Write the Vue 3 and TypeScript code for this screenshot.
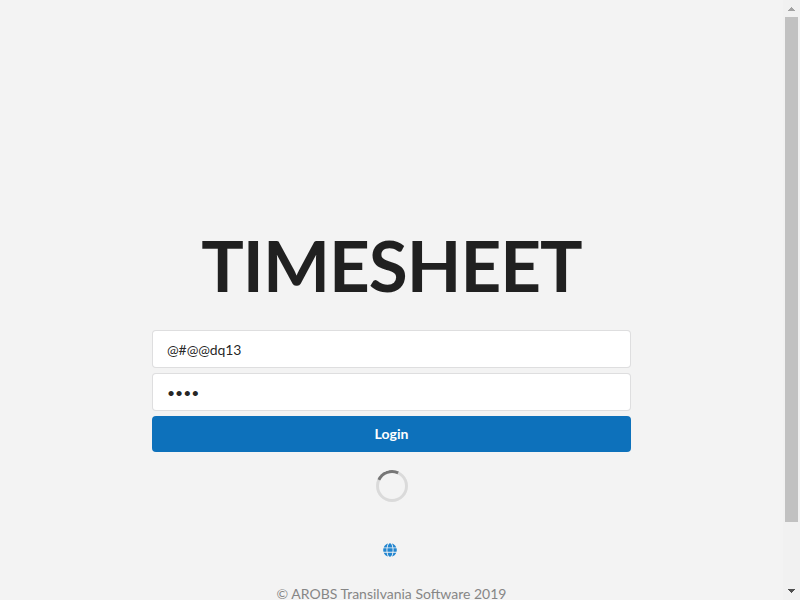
<script setup lang="ts">
import { ref } from 'vue'

const username = ref<string>('@#@@dq13')
const password = ref<string>('abcd')
</script>

<template>
  <div class="page">
    <main class="content">
      <h1 class="title">TIMESHEET</h1>
      <form class="form" @submit.prevent>
        <input v-model="username" class="field" type="text" />
        <input v-model="password" class="field secret" type="password" />
        <button class="login" type="submit">Login</button>
      </form>
      <div class="loader"></div>
      <svg class="globe" viewBox="0 0 496 512" width="14" height="14">
        <path
          fill="#2185d0"
          d="M336.500 160C322 70.700 287.800 8 248 8s-74 62.700-88.500 152h177zM152 256c0 22.200 1.200 43.500 3.300 64h185.300c2.100-20.500 3.300-41.800 3.300-64s-1.200-43.500-3.300-64H155.300c-2.100 20.500-3.300 41.800-3.300 64zm324.700-96c-28.600-67.900-86.500-120.400-158-141.600 24.400 33.800 41.200 84.700 50 141.600h108zM177.200 18.400C105.800 39.600 47.800 92.100 19.300 160h108c8.700-56.900 25.500-107.800 49.900-141.600zM487.400 192H372.700c2.100 21 3.300 42.500 3.300 64s-1.200 43-3.300 64h114.600c5.500-20.500 8.600-41.800 8.600-64s-3.100-43.500-8.500-64zM120 256c0-21.500 1.200-43 3.300-64H8.600C3.200 212.500 0 233.800 0 256s3.200 43.500 8.600 64h114.600c-2-21-3.200-42.500-3.200-64zm39.500 96c14.500 89.300 48.700 152 88.500 152s74-62.700 88.500-152h-177zm159.300 141.600c71.400-21.200 129.400-73.700 158-141.600h-108c-8.800 56.900-25.600 107.800-50 141.600zM19.300 352c28.600 67.900 86.500 120.400 158 141.600-24.400-33.800-41.200-84.700-50-141.600h-108z"
        />
      </svg>
      <footer class="footer">© AROBS Transilvania Software 2019</footer>
    </main>
    <div class="scrollbar">
      <svg class="arrow" width="7" height="4" viewBox="0 0 7 4" shape-rendering="crispEdges">
        <path fill="#a3a3a3" d="M3 0h1v1h1v1h1v1h1v1H0V3h1V2h1V1h1z" />
      </svg>
      <div class="thumb"></div>
      <svg class="arrow" width="7" height="4" viewBox="0 0 7 4" shape-rendering="crispEdges">
        <path fill="#505050" d="M0 0h7v1H6v1H5v1H4v1H3V3H2V2H1V1H0z" />
      </svg>
    </div>
  </div>
</template>

<style>
body {
  margin: 0;
  overflow: hidden;
  background: #f3f3f3;
}
</style>

<style scoped>
.page {
  display: flex;
  height: 600px;
  overflow: hidden;
  font-family: Lato, 'Liberation Sans', sans-serif;
  font-size: 14px;
  color: rgba(0, 0, 0, 0.87);
}
.content {
  flex: 1;
  display: flex;
  flex-direction: column;
  align-items: center;
  box-sizing: border-box;
  padding-top: 220px;
}
.title {
  flex: none;
  margin: 0 0 20px;
  font-size: 71px;
  line-height: 90px;
  font-weight: 700;
  letter-spacing: -1px;
}
.form {
  flex: none;
  display: flex;
  flex-direction: column;
  gap: 5px;
  width: 479px;
}
.field {
  box-sizing: border-box;
  height: 38px;
  padding: 9px 14px;
  border: 1px solid rgba(34, 36, 38, 0.15);
  border-radius: 4px;
  outline: 0;
  background: #fff;
  color: rgba(0, 0, 0, 0.87);
  font: 14px Lato, 'Liberation Sans', sans-serif;
  letter-spacing: -0.1px;
}
.secret {
  letter-spacing: 0;
}
.login {
  height: 36px;
  padding: 0;
  border: 0;
  border-radius: 4px;
  background: #0d71bb;
  color: #fff;
  font: 700 14px/14px Lato, 'Liberation Sans', sans-serif;
  letter-spacing: 0.1px;
}
.loader {
  flex: none;
  position: relative;
  box-sizing: border-box;
  width: 32px;
  height: 32px;
  margin-top: 18px;
  border: 3px solid rgba(0, 0, 0, 0.1);
  border-radius: 50%;
}
.loader::after {
  content: '';
  position: absolute;
  inset: -3px;
  border: 3px solid transparent;
  border-top-color: #767676;
  border-radius: 50%;
  transform: rotate(-20deg);
}
.globe {
  flex: none;
  margin-top: 41px;
  margin-right: 4px;
}
.footer {
  flex: none;
  margin-top: 27px;
  line-height: 20px;
  color: #868686;
  white-space: nowrap;
}
.scrollbar {
  display: flex;
  flex-direction: column;
  align-items: center;
  box-sizing: border-box;
  width: 17px;
  padding: 7px 0;
  background: #f1f1f1;
}
.arrow {
  flex: none;
}
.thumb {
  width: 13px;
  height: 505px;
  margin: 6px 0 auto;
  background: #c1c1c1;
}
</style>
